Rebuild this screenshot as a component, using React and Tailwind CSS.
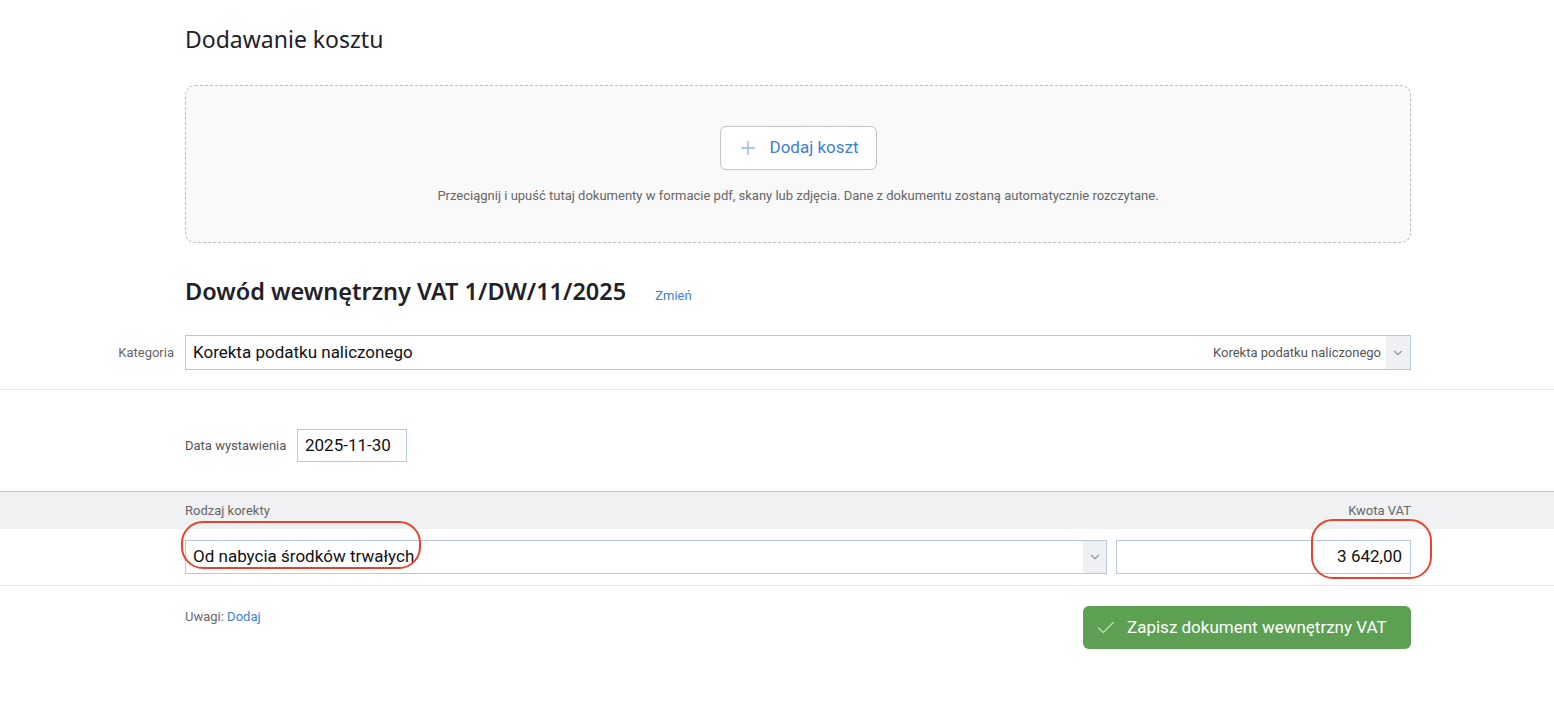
import { Plus, Check, ChevronDown } from "lucide-react";

const heading = { fontFamily: '"Noto Sans", "Open Sans", sans-serif' };

function Scribble({ className }) {
  // hand-drawn red marker around highlighted fields
  return (
    <div className={`pointer-events-none absolute rounded-[22px] border-[2.5px] border-[#e8432f] ${className}`} />
  );
}

export default function App() {
  return (
    <div className="min-h-[704px] bg-white text-[#222] font-['Roboto',sans-serif]">
      <div className="ml-[185px] w-[1226px] pt-[24px]">
        <h1 style={heading} className="text-[23px] leading-[30px] text-[#1f2228]">Dodawanie kosztu</h1>

        {/* drop zone */}
        <div className="mt-[31px] flex h-[158px] flex-col items-center rounded-[10px] border border-dashed border-[#bdbdbd] bg-[#f9f9f9] pt-[40px]">
          <button className="flex h-[44px] w-[157px] items-center justify-center gap-[10px] rounded-[6px] border border-[#c4c4c4] bg-white text-[17px] text-[#3b7fd6]">
            <Plus size={22} strokeWidth={1.4} className="text-[#8fb6e6]" />
            Dodaj koszt
          </button>
          <p className="mt-[16px] text-[13px] text-[#666]">
            Przeciągnij i upuść tutaj dokumenty w formacie pdf, skany lub zdjęcia. Dane z dokumentu zostaną automatycznie rozczytane.
          </p>
        </div>

        <div className="mt-[32px] flex items-baseline">
          <h2 style={heading} className="text-[23.5px] font-semibold leading-[32px] text-[#1f2228]">Dowód wewnętrzny VAT 1/DW/11/2025</h2>
          <a className="ml-[29px] text-[13px] text-[#3b7fd6]">Zmień</a>
        </div>

        {/* Kategoria */}
        <div className="relative mt-[28px] flex h-[35px] items-center border border-[#b8c8d8]">
          <span className="absolute right-[1236px] text-[13px] text-[#666]">Kategoria</span>
          <span className="flex-1 pl-[7px] text-[17px] text-[#111]">Korekta podatku naliczonego</span>
          <span className="pr-[5px] text-[13px] text-[#555]">Korekta podatku naliczonego</span>
          <span className="flex h-full w-[24px] items-center justify-center bg-[#eef0f3]">
            <ChevronDown size={14} className="text-[#8a97a8]" />
          </span>
        </div>
      </div>

      <div className="mt-[19px] border-t border-[#e6e6e6]" />

      <div className="ml-[185px] flex w-[1226px] items-center pt-[39px]">
        <span className="w-[112px] text-[13px] text-[#555]">Data wystawienia</span>
        <div className="flex h-[33px] w-[110px] items-center border border-[#b8c8d8] pl-[7px] text-[17px] text-[#111]">2025-11-30</div>
      </div>

      {/* table */}
      <div className="mt-[29px] border-t border-[#c6c6c6] bg-[#f0f1f3]">
        <div className="ml-[185px] flex h-[37px] w-[1226px] items-center justify-between text-[13px] text-[#666]">
          <span>Rodzaj korekty</span>
          <span>Kwota VAT</span>
        </div>
      </div>
      <div className="border-b border-[#e6e6e6]">
        <div className="relative ml-[185px] flex w-[1226px] gap-[9px] py-[11px]">
          <div className="flex h-[34px] w-[922px] items-center border border-[#b8c8d8]">
            <span className="flex-1 pl-[7px] text-[17px] text-[#111]">Od nabycia środków trwałych</span>
            <span className="flex h-full w-[23px] items-center justify-center bg-[#eef0f3]">
              <ChevronDown size={14} className="text-[#8a97a8]" />
            </span>
          </div>
          <div className="flex h-[34px] flex-1 items-center justify-end border border-[#b8c8d8] pr-[8px] text-[17px] text-[#111]">3 642,00</div>
          <Scribble className="left-[-4px] top-[-8px] h-[48px] w-[240px]" />
          <Scribble className="left-[1126px] top-[-10px] h-[60px] w-[121px]" />
        </div>
      </div>

      <div className="ml-[185px] flex w-[1226px] items-start justify-between pt-[20px]">
        <span className="pt-[1px] text-[13px] text-[#666]">
          Uwagi: <a className="text-[#3b7fd6]">Dodaj</a>
        </span>
        <button className="flex h-[43px] w-[328px] items-center gap-[10px] rounded-[6px] bg-[#5da053] pl-[12px] text-[17px] text-white">
          <Check size={22} strokeWidth={1.6} className="text-[#b8d8b2]" />
          Zapisz dokument wewnętrzny VAT
        </button>
      </div>
    </div>
  );
}
